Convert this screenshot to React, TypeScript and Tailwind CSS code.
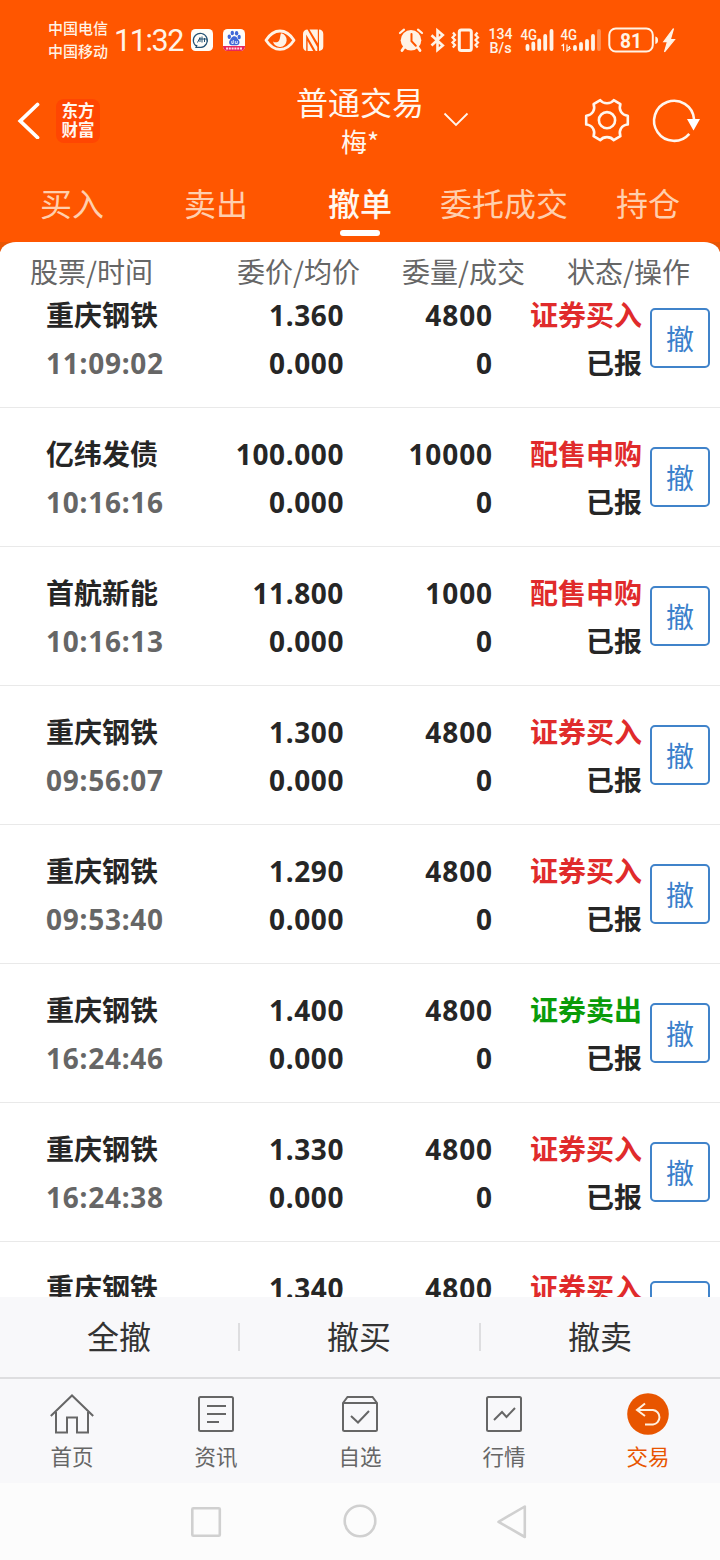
import type { ReactNode } from 'react';
import clsx from 'clsx';

type Order = {
  name: string;
  time: string;
  price: string;
  amount: string;
  status: string;
  sell?: boolean;
};

const orders: Order[] = [
  { name: '重庆钢铁', time: '11:09:02', price: '1.360', amount: '4800', status: '证券买入' },
  { name: '亿纬发债', time: '10:16:16', price: '100.000', amount: '10000', status: '配售申购' },
  { name: '首航新能', time: '10:16:13', price: '11.800', amount: '1000', status: '配售申购' },
  { name: '重庆钢铁', time: '09:56:07', price: '1.300', amount: '4800', status: '证券买入' },
  { name: '重庆钢铁', time: '09:53:40', price: '1.290', amount: '4800', status: '证券买入' },
  { name: '重庆钢铁', time: '16:24:46', price: '1.400', amount: '4800', status: '证券卖出', sell: true },
  { name: '重庆钢铁', time: '16:24:38', price: '1.330', amount: '4800', status: '证券买入' },
  { name: '重庆钢铁', time: '', price: '1.340', amount: '4800', status: '证券买入' },
];

const tabs = ['买入', '卖出', '撤单', '委托成交', '持仓'];

function StatusBar() {
  return (
    <div className="flex h-20 text-[#fff3e6]">
      <div className="ml-[48px] w-[66px] pt-[16px] text-[15px] leading-[23px] font-medium">
        <p>中国电信</p>
        <p>中国移动</p>
      </div>
      <p className="w-[77px] pt-[2px] font-['Roboto','Noto_Sans_CJK_SC',sans-serif] text-[30.500px] leading-[78px] tracking-[-1.400px]">
        11:32
      </p>
      <svg className="h-20 w-[140px]" viewBox="191 0 140 80" fill="none">
        {/* chat app */}
        <rect x="191" y="29" width="22" height="22" rx="4.5" fill="#fffdf8" />
        <path d="M197 46.500A7 7 0 1 1 201 47.300L196 47.300L197 45" stroke="#255273" strokeWidth="1.200" />
        <path d="M197.500 42.500l2.500-5v4.500M202 36.500v6M204.500 38v4M207 38.500v3M199 39h8" stroke="#255273" strokeWidth="1" />
        {/* baidu */}
        <rect x="223" y="29" width="22" height="22" rx="4.500" fill="#fffdf8" />
        <ellipse cx="229.300" cy="36.800" rx="1.700" ry="2.300" fill="#3f68d8" />
        <ellipse cx="232.300" cy="33" rx="1.700" ry="2.200" fill="#3f68d8" />
        <ellipse cx="236.600" cy="33.200" rx="1.700" ry="2.200" fill="#3f68d8" />
        <ellipse cx="239.200" cy="37" rx="1.600" ry="2.200" fill="#3f68d8" />
        <path d="M234.300 36.300c2.500 0 3 2.300 4.500 4 1.500 2 .5 5-2 5h-5c-2.500 0-3.500-3-2-5 1.500-1.700 2-4 4.500-4z" fill="#3f68d8" />
        <path d="M231.800 41v2.500h1.500V40M235.300 41v2.500h2V41" stroke="#fff" strokeWidth=".8" />
        <path d="M223 46h22v.5a4.500 4.500 0 0 1-4.500 4.500h-13a4.500 4.500 0 0 1-4.500-4.500z" fill="#e8265c" />
        <path d="M226 48.500h16" stroke="#ffd9df" strokeWidth="2" strokeDasharray="2 .8" />
        {/* eye comfort */}
        <path d="M266 40.200c4-6.200 8.800-9.200 14-9.200s10 3 14 9.200c-4 6.200-8.800 9.200-14 9.200s-10-3-14-9.200z" stroke="currentColor" strokeWidth="2.800" strokeLinejoin="round" />
        <path d="M281 33.300a6.900 6.900 0 1 1-8 8.200c2.200 1.400 4.800 1 6-.8 1.400-2.200 1-5 2-7.400z" fill="currentColor" />
        {/* nfc */}
        <path d="M307.500 29.500c-2.500 0-4.500 1.500-4.500 4.500v12.500c0 2.500 1.400 4 3.200 4.400V34.500l9.500 16.400h1.600V47zM309.500 29.500l8.300 13.800V29.500zM307.600 41v9.900h5.600zM319 29.500v21.400c2.500 0 4.300-1.500 4.300-4.400V34c0-3-1.800-4.500-4.300-4.500z" fill="currentColor" />
      </svg>
      <svg className="ml-[64px] h-20 w-[285px]" viewBox="395 0 285 80" fill="none">
        {/* alarm */}
        <path d="M400 33l4-3.400M422 33l-4-3.400" stroke="currentColor" strokeWidth="2.200" strokeLinecap="round" />
        <circle cx="411" cy="40.300" r="10.300" fill="currentColor" />
        <path d="M404 47.500l-2 3M418 47.500l2 3" stroke="currentColor" strokeWidth="2.800" strokeLinecap="round" />
        <path d="M411.500 34v7.200l4.300 4.600" stroke="#ff5600" strokeWidth="2" strokeLinecap="round" />
        {/* bluetooth */}
        <path d="M431.500 35.200l11.300 10.300-5.300 4.500V30.500l5.300 4.500-11.300 10.500" stroke="currentColor" strokeWidth="2.600" />
        {/* vibrate */}
        <rect x="459.300" y="30" width="12" height="20.500" rx="2" stroke="currentColor" strokeWidth="3" />
        <path d="M453 32.500l2 2.500-2.500 2.500 2.500 2.500-2.500 2.500 2.500 2.500-2.200 2.500M477.500 32.500l-2 2.500 2.500 2.500-2.500 2.500 2.500 2.500-2.500 2.500 2.200 2.500" stroke="currentColor" strokeWidth="2.200" />
        <g fill="currentColor" fontFamily="Roboto, sans-serif">
          <text x="488.500" y="39" fontSize="15" fontWeight="500" textLength="24" lengthAdjust="spacingAndGlyphs">134</text>
          <text x="489.500" y="53" fontSize="15" fontWeight="500" textLength="22" lengthAdjust="spacingAndGlyphs">B/s</text>
          <text x="520.500" y="39.500" fontSize="14.500" fontWeight="500" textLength="16.500" lengthAdjust="spacingAndGlyphs">4G</text>
          <text x="560.500" y="39.500" fontSize="14.500" fontWeight="500" textLength="16.500" lengthAdjust="spacingAndGlyphs">4G</text>
          <text x="620" y="47.700" fontSize="21" fontWeight="700" textLength="22" lengthAdjust="spacingAndGlyphs">81</text>
        </g>
        {/* signal bars */}
        <g stroke="currentColor" strokeWidth="3.800" strokeLinecap="round">
          <path d="M527.500 46v3M533.300 43.500v5.500M539.200 40.500v8.500M545.200 36v13M551.500 31v18" />
          <path d="M575 47v2M581 44v5M587 41v8M593 36v13" />
          <path d="M599 31v18" opacity=".35" />
        </g>
        <path d="M563.500 51v-6.500l-2 1.500M567 44.500V51l3-2.500-2-1M569.500 46v4" stroke="currentColor" strokeWidth="1.200" />
        {/* battery */}
        <rect x="609.300" y="28.500" width="43.500" height="23" rx="6.500" stroke="currentColor" strokeWidth="2" />
        <path d="M655.300 36.500c2 .5 2.700 1.500 2.700 3.700s-.7 3.200-2.700 3.700z" fill="currentColor" />
        <path d="M673.500 28.500l-9.700 13.200h3.700l-3 10.300 10-12.500h-4.200z" fill="currentColor" stroke="currentColor" strokeWidth="1.200" />
      </svg>
    </div>
  );
}

function TitleBar() {
  return (
    <div className="grid h-20 grid-cols-[1fr_240px_1fr] text-[#fff6ee]">
      <div className="flex items-center pl-[17px]">
        <svg className="h-[38px] w-[24px]" viewBox="0 0 24 38" fill="none">
          <path d="M20.500 3.500L3.300 20 20.500 36.500" stroke="white" strokeWidth="3.800" strokeLinecap="round" />
        </svg>
        <div className="mt-[2px] ml-[15px] flex size-11 flex-col items-center justify-center rounded-lg bg-[#ff4602] pb-[2px] text-[16.500px] leading-[19px] font-bold">
          <span>东方</span>
          <span>财富</span>
        </div>
      </div>
      <div className="relative text-center">
        <h1 className="pt-px text-[32px] leading-10">普通交易</h1>
        <p className="mt-[2px] text-[26px] leading-9">梅*</p>
        <svg className="absolute top-[31px] right-[11px] h-[18px] w-[26px]" viewBox="0 0 26 18" fill="none">
          <path d="M1.500 2.500L13 14 24.500 2.500" stroke="currentColor" strokeWidth="1.800" />
        </svg>
      </div>
      <svg className="h-20 w-[240px]" viewBox="480 80 240 80" fill="none" stroke="currentColor">
        <path
          d="M600.300 100.200c2 2.500 4.300 3 6.700 3s4.700-.5 6.700-3l6.700 4c-1.200 3.300-.7 5.500.5 7.500s3 3.700 6.900 4.100v8.700c-3.900.400-5.700 2.100-6.900 4.100s-1.700 4.200-.5 7.500l-6.700 4c-2-2.500-4.300-3-6.700-3s-4.700.5-6.700 3l-6.700-4c1.200-3.300.7-5.500-.5-7.500s-3-3.700-6.900-4.100v-8.700c3.900-.4 5.700-2.100 6.900-4.100s1.700-4.200.5-7.500z"
          strokeWidth="2.600"
          strokeLinejoin="round"
        />
        <circle cx="607" cy="120.200" r="8.100" strokeWidth="2.600" />
        <path d="M689.300 133.800A20 20 0 1 1 694 119" strokeWidth="2.600" />
        <path d="M687 119h13l-6.500 11.500z" fill="white" stroke="none" />
      </svg>
    </div>
  );
}

function OrderRow({ order }: { order: Order }) {
  return (
    <div className="grid h-[139px] grid-cols-[143px_153px_149px_149px_60px] border-b border-[#e9e9e9] pt-[29px] pl-[47px] text-[28px] leading-[32px] font-bold text-[#262626]">
      <div className="-ml-px flex flex-col gap-4">
        <p>{order.name}</p>
        <p className="pt-px font-['Noto_Sans',sans-serif] tracking-[.75px] text-[#666]">{order.time}</p>
      </div>
      <div className="-mr-px flex flex-col gap-4 pt-px text-right font-['Noto_Sans',sans-serif] tracking-[.6px]">
        <p>{order.price}</p>
        <p>0.000</p>
      </div>
      <div className="-mr-px flex flex-col gap-4 pt-px text-right font-['Noto_Sans',sans-serif] tracking-[.9px]">
        <p>{order.amount}</p>
        <p>0</p>
      </div>
      <div className="-mr-px flex flex-col gap-4 text-right">
        <p className={clsx(order.sell ? 'text-[#0a9c0a]' : 'text-[#e02b2b]')}>{order.status}</p>
        <p>已报</p>
      </div>
      <button className="mt-[10px] ml-[9px] size-[60px] rounded-[5px] border-2 border-[#4083ca] text-[28px] leading-[54px] font-normal text-[#3a80cb]">
        撤
      </button>
    </div>
  );
}

function NavItem({ label, active, children }: { label: string; active?: boolean; children: ReactNode }) {
  return (
    <div className={clsx('flex flex-col items-center', active ? 'text-[#e85500]' : 'text-[#666]')}>
      <svg className="mt-[12px] size-[46px]" viewBox="0 0 46 46" fill="none" stroke="currentColor" strokeWidth="2">
        {children}
      </svg>
      <span className="mt-[3px] text-[21.500px] leading-8">{label}</span>
    </div>
  );
}

export default function App() {
  return (
    <div className="flex h-[1560px] w-[720px] flex-col overflow-hidden bg-[#ff5600] font-['Noto_Sans_CJK_SC',sans-serif]">
      <StatusBar />
      <TitleBar />
      <nav className="grid h-[82px] grid-cols-5 text-center text-[32px] leading-[84px] text-[#ffcfae]">
        {tabs.map((tab) => (
          <div key={tab} className={clsx('relative whitespace-nowrap', tab === '撤单' && 'font-medium text-[#fff8f0]')}>
            {tab}
            {tab === '撤单' && (
              <span className="absolute bottom-[8px] left-[52px] h-[6px] w-10 rounded-full bg-white" />
            )}
          </div>
        ))}
      </nav>

      <div className="bg-[linear-gradient(#e95504_10px,white_10px)]">
        <div className="flex h-[54px] rounded-t-[16px_12px] bg-white pt-[9px] text-[28px] leading-[40px] text-[#666]">
          <span className="ml-[30px] w-[207px]">股票/时间</span>
          <span className="w-[165px]">委价/均价</span>
          <span className="w-[165px]">委量/成交</span>
          <span>状态/操作</span>
        </div>
      </div>
      <div className="h-[1001px] overflow-hidden bg-white">
        <div className="-mt-[27px]">
          {orders.map((order, i) => (
            <OrderRow key={i} order={order} />
          ))}
        </div>
      </div>

      <div className="grid h-[82px] grid-cols-3 items-center border-b-2 border-[#dedee0] bg-[#f8f8fa] text-center text-[32px] leading-[40px] text-[#333]">
        <span className="-mt-[5px] -ml-[2px]">全撤</span>
        <div className="flex h-7 items-center justify-between">
          <span className="-ml-[2px] h-7 w-[2px] bg-[#dedee0]" />
          <span className="-mt-[5px] -ml-px">撤买</span>
          <span className="-mr-[1px] h-7 w-[2px] bg-[#dedee0]" />
        </div>
        <span className="-mt-[5px]">撤卖</span>
      </div>

      <div className="grid h-[104px] grid-cols-5 bg-[#f8f8fa]">
        <NavItem label="首页">
          <path d="M1.800 25L23 4.500 44.200 25M7 21v20.500h11V26.500h10v15h11V21" />
        </NavItem>
        <NavItem label="资讯">
          <rect x="6" y="6" width="34" height="34" rx="1.500" />
          <path d="M14 15h19M14 23h19M14 31h12" />
        </NavItem>
        <NavItem label="自选">
          <path d="M6 12l4.500-6h25l4.500 6v26.500q0 1.500-1.500 1.500h-31q-1.500 0-1.500-1.500zM6 12h34M14 25l7 6.500L32 20" />
        </NavItem>
        <NavItem label="行情">
          <rect x="6" y="6" width="34" height="34" rx="1.500" />
          <path d="M13 29l8-8 4.500 5L34 17" />
        </NavItem>
        <NavItem label="交易" active>
          <circle cx="23" cy="23" r="20.800" fill="currentColor" stroke="none" />
          <path d="M20 12.500L12 19l8 6M12 19h16a7.300 7.300 0 0 1 0 14.500h-8" stroke="#fff0df" />
        </NavItem>
      </div>

      <div className="flex h-[77px] bg-[#fcfcfc]">
        <svg className="h-[77px] w-[720px]" viewBox="0 1483 720 77" fill="none" stroke="#d0d0d0" strokeWidth="2.600" strokeLinejoin="round">
          <rect x="192.300" y="1508.300" width="27.500" height="27.500" rx="1" />
          <circle cx="360" cy="1521" r="15.300" />
          <path d="M498.500 1521.800L524.800 1506.500V1537z" />
        </svg>
      </div>
    </div>
  );
}
